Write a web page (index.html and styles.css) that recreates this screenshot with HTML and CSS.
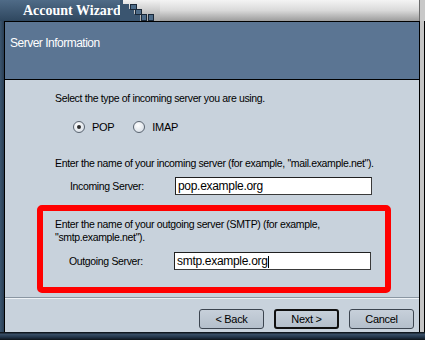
FILE: index.html
```html
<!DOCTYPE html>
<html>
<head>
<meta charset="utf-8">
<link rel="stylesheet" href="styles.css">
</head>
<body>
<div class="window">
  <div class="titlebar">
    <div class="title-left">Account Wizard</div>
    <svg class="steps" width="40" height="21" viewBox="0 0 40 21">
      <polygon points="0,0 3,0 3,4 9,4 9,9 14,9 14,14 20,14 20,21 0,21" fill="#3a5570"/>
      <rect x="10.5" y="4.5" width="6" height="5" fill="#4d6b88" stroke="#1a2838"/>
      <rect x="15.5" y="9.5" width="6" height="5" fill="#4d6b88" stroke="#1a2838"/>
      <rect x="21.5" y="14.5" width="5" height="6" fill="#4d6b88" stroke="#1a2838"/>
      <rect x="28.5" y="14.5" width="5" height="6" fill="#4d6b88" stroke="#1a2838"/>
    </svg>
    <div class="title-right"></div>
  </div>
  <div class="body-row">
    <div class="lframe"></div>
    <div class="main">
      <div class="header">Server Information</div>
      <div class="content">
        <p class="line first">Select the type of incoming server you are using.</p>
        <div class="radios">
          <span class="radio checked"></span><span class="rlabel">POP</span>
          <span class="radio"></span><span class="rlabel">IMAP</span>
        </div>
        <p class="line incoming">Enter the name of your incoming server (for example, "mail.example.net").</p>
        <div class="field">
          <span class="flabel">Incoming Server:</span>
          <div class="input">pop.example.org</div>
        </div>
        <div class="highlight">
          <p class="line">Enter the name of your outgoing server (SMTP) (for example,<br>"smtp.example.net").</p>
          <div class="field out">
            <span class="flabel">Outgoing Server:</span>
            <div class="input">smtp.example.org<span class="caret"></span></div>
          </div>
        </div>
      </div>
      <div class="separator"></div>
      <div class="buttons">
        <div class="btn">&lt; Back</div>
        <div class="btn default">Next &gt;</div>
        <div class="btn">Cancel</div>
      </div>
    </div>
    <div class="rframe"></div>
  </div>
  <div class="bottom"></div>
</div>
</body>
</html>
```
FILE: styles.css
```css
html, body { margin: 0; padding: 0; }
body { background: #ffffff; font-family: "Liberation Sans", Arial, sans-serif; }

.window {
  width: 425px;
  height: 340px;
  display: flex;
  flex-direction: column;
  background: #23374b;
  overflow: hidden;
}

.titlebar { height: 21px; display: flex; flex: none; }
.title-left {
  width: 120px;
  padding-left: 23px;
  box-sizing: border-box;
  background: linear-gradient(#4f6b87, #2f475f);
  color: #ffffff;
  font: bold 14px/21px "Liberation Serif", "Times New Roman", serif;
  white-space: nowrap;
}
.steps { display: block; flex: none; background: linear-gradient(#f2f2f2, #a6a6a6); }
.title-right {
  flex: 1;
  background: linear-gradient(#f4f4f4 0%, #d9d9d9 50%, #9c9c9c 100%);
  border-right: 5px solid #c8c8c8;
  box-shadow: inset -1px 0 0 #6a6a6a;
}

.body-row { display: flex; flex: 1; min-height: 0; }
.lframe { width: 4px; background: linear-gradient(90deg, #3b556f, #2a3f55); border-right: 1px solid #000; flex: none; }
.rframe { width: 4px; background: #c4c4c4; border-left: 1px solid #000; border-right: 1px solid #000; flex: none; }

.main { flex: 1; min-width: 0; display: flex; flex-direction: column; background: #c8d2dc; }

.header {
  flex: none;
  background: #5b7593;
  border-top: 1px solid #000;
  border-bottom: 1px solid #000;
  color: #ffffff;
  font-size: 12px;
  letter-spacing: -0.5px;
  line-height: 14px;
  padding: 14px 0 0 5px;
  height: 43px;
}

.content {
  height: 217px;
  flex: none;
  box-sizing: border-box;
  padding: 12px 0 0 50px;
  font-size: 10.5px;
  letter-spacing: -0.35px;
  color: #000;
}
.line { margin: 0; line-height: 13px; white-space: nowrap; }

.radios { display: flex; align-items: center; margin: 15px 0 0 18px; height: 14px; }
.radio {
  width: 10px; height: 10px;
  border-radius: 50%;
  border: 1px solid #5a6470;
  background: radial-gradient(circle at 40% 35%, #ffffff, #dde3ea 70%, #b9c2cc);
  position: relative;
  flex: none;
}
.radio.checked::after {
  content: "";
  position: absolute;
  left: 3px; top: 3px;
  width: 4px; height: 4px;
  border-radius: 50%;
  background: #2c2c2c;
}
.rlabel { margin: 0 19px 0 7px; font-size: 11px; letter-spacing: -0.3px; }

.incoming { margin-top: 23px; }

.field { display: flex; align-items: center; margin: 7px 0 0 15px; }
.flabel { width: 105px; }
.input {
  width: 193px; height: 16px;
  border: 1px solid #3a3a3a;
  border-top-color: #202020;
  border-left-color: #202020;
  background: #fff;
  font-size: 12px;
  letter-spacing: -0.3px;
  line-height: 16px;
  padding-left: 2px;
  box-sizing: content-box;
}
.caret { display: inline-block; width: 1px; height: 12px; background: #000; vertical-align: middle; margin-left: 0; }

.highlight {
  margin: 10px 0 0 -18px;
  width: 354px;
  height: 88px;
  box-sizing: border-box;
  border: 6px solid #ff0000;
  border-radius: 5px;
  padding: 7px 0 0 12px;
}
.field.out { margin: 8px 0 0 14px; }

.separator { height: 0; border-top: 1px solid #8a96a2; border-bottom: 1px solid #eef2f6; flex: none; }

.buttons {
  flex: 1;
  display: flex;
  justify-content: flex-end;
  align-items: flex-start;
  padding: 10px 5px 0 0;
  gap: 10px;
}
.btn {
  width: 63px; height: 18px;
  flex: none;
  border: 1px solid #3c4550;
  border-radius: 3px;
  background: linear-gradient(#c7d0da, #b4bfcb);
  font-size: 11px;
  letter-spacing: -0.3px;
  line-height: 18px;
  text-align: center;
}
.btn.default { border: 2px solid #101010; width: 61px; height: 16px; line-height: 16px; }

.bottom {
  height: 8px;
  flex: none;
  background: linear-gradient(#101820 0, #101820 1px, #3a5068 2px, #22354a 5px, #0c1218 8px);
}
```
